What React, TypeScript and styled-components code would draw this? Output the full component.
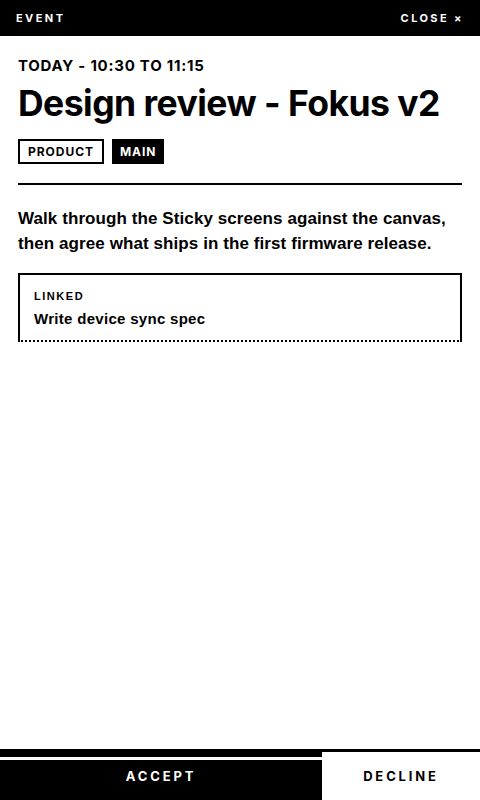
import styled, { createGlobalStyle } from "styled-components";

const GlobalStyle = createGlobalStyle`
  html, body, #root {
    margin: 0;
    padding: 0;
    height: 100%;
  }
  body {
    background: #fff;
    color: #000;
    font-family: Inter, "Noto Sans", sans-serif;
  }
  * {
    box-sizing: border-box;
  }
`;

const Screen = styled.div`
  height: 100vh;
  display: flex;
  flex-direction: column;
`;

const TopBar = styled.header`
  height: 36px;
  flex-shrink: 0;
  background: #000;
  color: #fff;
  display: flex;
  align-items: center;
  justify-content: space-between;
  padding: 0 16px;
`;

const BarLabel = styled.span`
  font-size: 11px;
  font-weight: 700;
  letter-spacing: 0.22em;
`;

const CloseButton = styled.button`
  background: none;
  border: none;
  color: #fff;
  padding: 0;
  font-family: inherit;
  font-size: 11px;
  font-weight: 700;
  letter-spacing: 0.22em;
  cursor: pointer;
`;

const Body = styled.main`
  flex: 1;
  display: flex;
  flex-direction: column;
  padding: 21px 18px 0;
`;

const When = styled.div`
  font-size: 15px;
  line-height: 18px;
  font-weight: 700;
  letter-spacing: 0.05em;
`;

const Title = styled.h1`
  margin: 10px 0 0;
  font-size: 35.5px;
  line-height: 37px;
  font-weight: 700;
  letter-spacing: -0.015em;
`;

const Tags = styled.div`
  display: flex;
  gap: 8px;
  margin-top: 17px;
`;

const Tag = styled.span<{ $filled?: boolean }>`
  display: inline-flex;
  align-items: center;
  height: 25px;
  padding: 0 8px;
  border: ${(p) => (p.$filled ? "none" : "2px solid #000")};
  background: ${(p) => (p.$filled ? "#000" : "#fff")};
  color: ${(p) => (p.$filled ? "#fff" : "#000")};
  font-size: 12px;
  font-weight: 700;
  letter-spacing: 0.08em;
`;

const Rule = styled.hr`
  margin: 19px 0 0;
  border: none;
  height: 2px;
  background: #000;
`;

const Description = styled.p`
  margin: 21px 0 0;
  font-family: "Liberation Sans", Arial, sans-serif;
  font-size: 17px;
  line-height: 25px;
  font-weight: 700;
  letter-spacing: 0.005em;
`;

const LinkedCard = styled.div`
  margin-top: 17px;
  border: 2px solid #000;
  border-bottom: 2px dotted #000;
  padding: 14px 14px 11px;
  display: flex;
  flex-direction: column;
  gap: 6px;
  font-family: "Liberation Sans", Arial, sans-serif;
`;

const LinkedLabel = styled.span`
  font-size: 11px;
  line-height: 14px;
  font-weight: 700;
  letter-spacing: 0.14em;
`;

const LinkedTitle = styled.span`
  font-size: 15px;
  line-height: 20px;
  font-weight: 700;
  letter-spacing: 0.02em;
`;

const Footer = styled.footer`
  flex-shrink: 0;
  display: grid;
  grid-template-columns: 1fr 158px;
  border-top: 3px solid #000;
`;

const ActionButton = styled.button<{ $primary?: boolean }>`
  height: 48px;
  border: none;
  background: ${(p) => (p.$primary ? "#000" : "#fff")};
  color: ${(p) => (p.$primary ? "#fff" : "#000")};
  box-shadow: ${(p) =>
    p.$primary ? "inset 0 5px 0 #000, inset 0 8px 0 #fff" : "none"};
  font-family: inherit;
  font-size: 13px;
  font-weight: 700;
  letter-spacing: 0.22em;
  padding: 0;
  cursor: pointer;
`;

export default function App() {
  return (
    <>
      <GlobalStyle />
      <Screen>
        <TopBar>
          <BarLabel>EVENT</BarLabel>
          <CloseButton>CLOSE ×</CloseButton>
        </TopBar>
        <Body>
          <When>TODAY - 10:30 TO 11:15</When>
          <Title>Design review - Fokus v2</Title>
          <Tags>
            <Tag>PRODUCT</Tag>
            <Tag $filled>MAIN</Tag>
          </Tags>
          <Rule />
          <Description>
            Walk through the Sticky screens against the canvas, then agree
            what ships in the first firmware release.
          </Description>
          <LinkedCard>
            <LinkedLabel>LINKED</LinkedLabel>
            <LinkedTitle>Write device sync spec</LinkedTitle>
          </LinkedCard>
        </Body>
        <Footer>
          <ActionButton $primary>ACCEPT</ActionButton>
          <ActionButton>DECLINE</ActionButton>
        </Footer>
      </Screen>
    </>
  );
}
